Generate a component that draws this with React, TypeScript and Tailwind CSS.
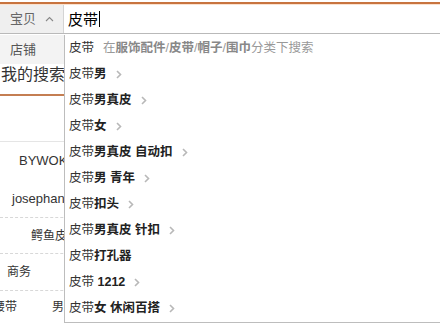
import React from "react";

const Chevron = () => (
  <svg width="6" height="9" viewBox="0 0 6 9" className="ml-[9px] shrink-0">
    <path d="M1 1 L4.5 4.5 L1 8" fill="none" stroke="#b8b8b8" strokeWidth="1.6" />
  </svg>
);

type Row = { bold: string; arrow: boolean };
const rows: Row[] = [
  { bold: "男", arrow: true },
  { bold: "男真皮", arrow: true },
  { bold: "女", arrow: true },
  { bold: "男真皮 自动扣", arrow: true },
  { bold: "男 青年", arrow: true },
  { bold: "扣头", arrow: true },
  { bold: "男真皮 针扣", arrow: true },
  { bold: "打孔器", arrow: false },
  { bold: " 1212", arrow: true },
  { bold: "女 休闲百搭", arrow: true },
];

export default function App() {
  return (
    <div
      className="relative w-[440px] h-[324px] overflow-hidden bg-white text-[#333]"
      style={{ fontFamily: '"Liberation Sans", "Noto Sans CJK SC", sans-serif' }}
    >
      {/* top orange rule */}
      <div className="h-[2px] bg-white" />
      <div className="h-[2px] bg-[#c8743f]" />
      <div className="h-[1px] bg-[#fbe2cf]" />

      {/* search bar */}
      <div className="flex h-[29px] border-b border-[#b9b9b9] ml-0">
        <div className="w-[64px] bg-[#efefef] flex items-center border-r border-[#d4d4d4]">
          <span className="ml-[10px] text-[13px] text-[#666]">宝贝</span>
          <svg width="9" height="6" viewBox="0 0 9 6" className="ml-[9px]">
            <path d="M1 5 L4.5 1.5 L8 5" fill="none" stroke="#888" strokeWidth="1.1" />
          </svg>
        </div>
        <div className="flex-1 flex items-center pl-[4px]">
          <span className="text-[15px] text-black leading-none">皮带</span>
          <span className="w-[1px] h-[16px] bg-black ml-[1px]" />
        </div>
      </div>

      {/* page content behind */}
      <div className="pt-[29px]">
        <div className="text-[16px] leading-[24px] text-[#333] pl-[1px]">我的搜索</div>
        <div className="mt-[7px] h-[2px] bg-[#c47e52]" />
        <div className="mt-[45px] h-[1px] bg-[#e5e5e5]" />
        <div className="h-[38px] flex items-center pl-[19px] text-[13px] text-[#333]">BYWOKY</div>
        <div className="h-[37px] flex items-center pl-[12px] text-[13px] text-[#333]">josephan</div>
        <div className="border-t border-dashed border-[#d8d8d8] h-[36px] flex items-center pl-[31px] text-[12px] text-[#333]">鳄鱼皮</div>
        <div className="border-t border-dashed border-[#d8d8d8] h-[37px] flex items-center pl-[7px] text-[12px] text-[#333]">商务</div>
        <div className="border-t border-dashed border-[#d8d8d8] h-[32px] flex items-center text-[12px] text-[#333]">
          <span className="-ml-[7px]">腰带</span>
          <span className="ml-[35px]">男</span>
        </div>
      </div>

      {/* 店铺 option overlay */}
      <div className="absolute left-0 top-[35px] w-[64px] h-[29px] bg-[#f3f3f3] flex items-center">
        <span className="ml-[10px] text-[13px] text-[#555]">店铺</span>
      </div>

      {/* suggestion list overlay */}
      <div className="absolute left-[64px] top-[35px] w-[400px] h-[288px] bg-white border-l border-b border-[#bdbdbd]">
        <div className="h-[26px] flex items-center pl-[4px] text-[12.5px]">
          <span className="text-[#333]">皮带</span>
          <span className="ml-[9px] text-[#999]">
            在<b className="text-[#888]">服饰配件</b>/<b className="text-[#888]">皮带</b>/<b className="text-[#888]">帽子</b>/<b className="text-[#888]">围巾</b>分类下搜索
          </span>
        </div>
        {rows.map((r, i) => (
          <div key={i} className="h-[26px] flex items-center pl-[4px] text-[12.5px]">
            <span className="text-[#333] whitespace-pre">
              皮带<b className="text-[#222]">{r.bold}</b>
            </span>
            {r.arrow && <Chevron />}
          </div>
        ))}
      </div>
    </div>
  );
}
